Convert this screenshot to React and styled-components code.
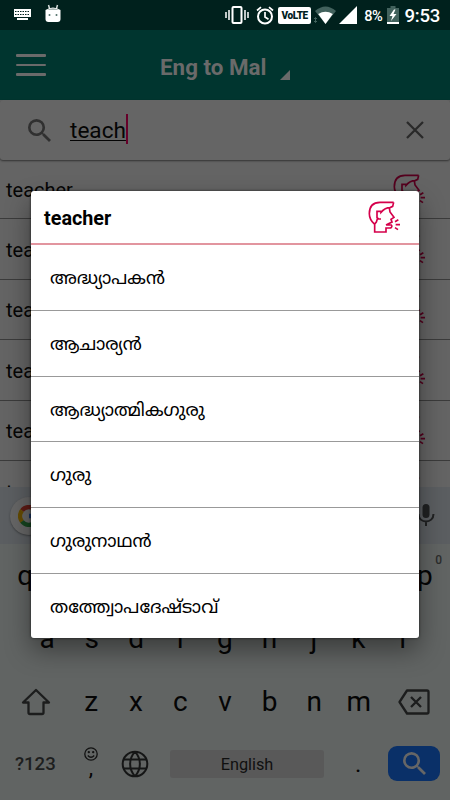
import React from 'react'
import styled, { createGlobalStyle } from 'styled-components';

const GlobalStyle = createGlobalStyle`
  * {
    box-sizing: border-box;
  }
  body {
    margin: 0;
    font-family: Roboto, "Liberation Sans", sans-serif;
  }
  svg {
    display: block;
    flex: none;
  }
`;

const Screen = styled.div`
  position: relative;
  display: flex;
  flex-direction: column;
  width: 450px;
  height: 800px;
  overflow: hidden;
  background: #646464;
`;

const StatusBar = styled.header`
  display: flex;
  align-items: center;
  height: 30px;
  padding: 0 10px 0 13px;
  background: #00211d;
  color: #fff;
`;

const Notifications = styled.div`
  display: flex;
  align-items: center;
  gap: 13px;
  flex: 1;
`;

const StatusText = styled.span`
  font-size: ${(p) => p.$size}px;
  font-weight: 500;
  line-height: 30px;
  letter-spacing: -0.3px;
  margin: 1px 0 0 ${(p) => p.$gap}px;
`;

const Volte = styled.span`
  width: 33px;
  height: 17px;
  margin: 0 3px 0 4px;
  border-radius: 2px;
  background: #fff;
  color: #00211d;
  font-size: 10px;
  font-weight: 900;
  line-height: 18px;
  letter-spacing: -0.4px;
  text-align: center;
`;

const Toolbar = styled.div`
  display: flex;
  align-items: center;
  height: 70px;
  padding: 0 16px;
  background: #00352f;
  color: #6a6a6a;
`;

const MenuButton = styled.div`
  display: flex;
  flex-direction: column;
  gap: 7px;
  width: 30px;
  span {
    height: 2.4px;
    border-radius: 1px;
    background: #6a6a6a;
  }
`;

const Title = styled.h1`
  display: flex;
  align-items: center;
  margin: 3px 0 0 114px;
  font-size: 22.4px;
  font-weight: 700;
  line-height: 30px;
`;

const Spinner = styled.i`
  width: 0;
  height: 0;
  margin: 16px 0 0 13px;
  border-left: 10px solid transparent;
  border-bottom: 10px solid #6a6a6a;
`;

const SearchBox = styled.div`
  display: flex;
  align-items: center;
  height: 60px;
  padding: 0 22px 0 28px;
  border-radius: 3px;
  background: #656565;
  box-shadow: 0 1px 2px rgba(0, 0, 0, 0.5);
  z-index: 1;
`;

const Query = styled.span`
  flex: 1;
  display: flex;
  align-items: center;
  margin-left: 19px;
  font-size: 22.6px;
  line-height: 26px;
  color: #050505;
  u {
    margin-top: 2px;
    text-decoration-thickness: 1px;
    text-underline-offset: 2px;
  }
`;

const Caret = styled.i`
  width: 2px;
  height: 30px;
  margin-top: -2px;
  background: #66002a;
`;

const WordList = styled.ul`
  flex: 1;
  min-height: 0;
  overflow: hidden;
  margin: 0;
  padding: 0;
  list-style: none;
`;

const WordRow = styled.li`
  display: flex;
  align-items: center;
  justify-content: space-between;
  height: 60.5px;
  padding: 2px 25px 0 6px;
  border-bottom: 1px solid #3b3b3b;
  font-size: 20px;
  color: #060606;
  &:first-child {
    height: 59px;
  }
`;

const Keyboard = styled.section`
  height: 313px;
  background: #616463;
  color: #050505;
`;

const Suggestions = styled.div`
  display: flex;
  align-items: center;
  justify-content: space-between;
  height: 57px;
  padding: 0 14px 0 10px;
  background: #5b5e61;
`;

const GoogleButton = styled.div`
  display: flex;
  align-items: center;
  justify-content: center;
  width: 38px;
  height: 38px;
  border-radius: 50%;
  background: #666;
  box-shadow: 0 1px 2px rgba(0, 0, 0, 0.35);
`;

const KeyRow = styled.div`
  display: flex;
  align-items: center;
  height: 63px;
  padding: 0 ${(p) => p.$pad}px;
`;

const Key = styled.div`
  position: relative;
  flex: 1;
  font-size: 28px;
  line-height: 40px;
  text-align: center;
`;

const KeyHint = styled.sup`
  position: absolute;
  top: -2px;
  right: 5px;
  font-size: 12px;
  font-weight: 500;
  line-height: 12px;
  color: #2b2c2c;
`;

const SideKey = styled.div`
  display: flex;
  justify-content: center;
  width: ${(p) => p.$width}px;
`;

const BottomRow = styled.div`
  display: flex;
  align-items: center;
  height: 61px;
  padding: 0 9px 0 15px;
`;

const SymbolsKey = styled.span`
  width: 61px;
  font-size: 18.6px;
  font-weight: 500;
  color: #1d1e1e;
`;

const EmojiKey = styled.span`
  display: flex;
  flex-direction: column;
  align-items: center;
  width: 30px;
  margin-top: -5px;
  font-size: 22px;
  line-height: 14px;
`;

const SpaceBar = styled.span`
  width: 154px;
  height: 28px;
  margin-left: 21px;
  border-radius: 3px;
  background: #595959;
  color: #101010;
  font-size: 16.3px;
  line-height: 29px;
  text-align: center;
`;

const PeriodKey = styled.span`
  width: 64px;
  padding-left: 31px;
  font-size: 24px;
`;

const SearchKey = styled.span`
  display: flex;
  align-items: center;
  justify-content: center;
  width: 52px;
  height: 35px;
  border-radius: 9px;
  background: #0a3068;
`;

const Overlay = styled.div`
  position: absolute;
  inset: 0;
  z-index: 2;
  padding: 191px 31px 0;
`;

const Dialog = styled.div`
  height: 447px;
  overflow: hidden;
  border-radius: 3px;
  background: #fff;
  color: #000;
`;

const DialogShadow = styled.div`
  border-radius: 3px;
  box-shadow: 0 12px 26px rgba(0, 0, 0, 0.4), 0 0 3px rgba(0, 0, 0, 0.6);
`;

const DialogHeader = styled.div`
  display: flex;
  align-items: center;
  justify-content: space-between;
  height: 54px;
  padding: 0 19px 0 13px;
  border-bottom: 2px solid #e2959f;
  font-size: 19.8px;
  font-weight: 700;
  span {
    margin-top: 2px;
  }
`;

const Meaning = styled.div`
  height: 65.8px;
  padding-left: 19px;
  border-bottom: 1px solid #999;
  font-family: Roboto, "Noto Sans Malayalam", "Noto Sans", sans-serif;
  font-size: 17.9px;
  line-height: 65px;
  white-space: nowrap;
  &:last-child {
    border-bottom: 0;
  }
`;

const meanings = [
  'അദ്ധ്യാപകൻ',
  'ആചാര്യൻ',
  'ആദ്ധ്യാത്മികഗുരു',
  'ഗുരു',
  'ഗുരുനാഥൻ',
  'തത്ത്വോപദേഷ്ടാവ്',
];

const words = ['teacher', 'teachers', 'teach', 'teaching', 'teachable', 'teachings'];

const SpeakIcon = ({ color = '#d5004b' }) => (
  <svg width="32" height="32" viewBox="0 0 96 96" fill="none" stroke={color} strokeWidth="5">
    <path d="M77 4H36C14 4 4 18 4 38c0 15 7 24 16 32v23h34V81h14c5-4 4-7 2-9H54M54 72l18-9-3-8 9-6-12-16-2-12 10-5 3-12M66 20c-11 0-19 5-27 14v-3H27v19l5 4h7M29 51l-4 12-6 7" />
    <path d="M81 62l10-6M83 71h13M81 80l9 6" />
  </svg>
);

const SearchIcon = ({ size, color }) => (
  <svg width={size} height={size} viewBox="3 3 17.5 17.5" fill={color}>
    <path d="M15.5 14h-.79l-.28-.27A6.47 6.47 0 0 0 16 9.5 6.5 6.5 0 1 0 9.5 16c1.61 0 3.09-.59 4.23-1.57l.27.28v.79l5 4.99L20.49 19l-4.99-5zm-6 0a4.5 4.5 0 1 1 0-9 4.5 4.5 0 0 1 0 9z" />
  </svg>
);

const AlarmIcon = styled.svg`
  margin-left: 7px;
`;

const StatusIcons = () => (
  <>
    <svg width="24" height="20" viewBox="0 0 24 20" fill="none" stroke="#fff" strokeWidth="2">
      <rect x="7.5" y="2" width="9" height="16" rx="1" />
      <path d="M4 5v10M1 7v6M20 5v10M23 7v6" strokeWidth="1.5" />
    </svg>
    <AlarmIcon width="18" height="19" viewBox="0 0 18 19" fill="none" stroke="#fff">
      <circle cx="9" cy="10.5" r="7" strokeWidth="2" />
      <path d="M9 6v5l3.5 2.2M1 4.5l4-3.4M17 4.5l-4-3.4" strokeWidth="1.7" />
    </AlarmIcon>
    <Volte>VoLTE</Volte>
    <svg width="23" height="18" viewBox="0 0 23 18">
      <path d="M1 5Q11.5-4 22 5L11.5 18z" fill="#42625d" />
      <path d="M4.2 8Q11.5 3.5 18.8 8L11.5 18z" fill="#fff" />
      <path d="M1.5 11.5v5M0 13l1.5-1.5L3 13M0 15l1.5 1.5L3 15" fill="none" stroke="#42625d" />
    </svg>
    <svg width="20" height="18" viewBox="-2 0 20 18">
      <path d="M18 0v18H0z" fill="#fff" />
    </svg>
  </>
);

const BatteryIcon = styled.svg`
  margin-left: 4px;
`;

const Battery = () => (
  <BatteryIcon width="12" height="18" viewBox="0 0 12 18">
    <path d="M3.5 0h5v2H12v14H0V2h3.5z" fill="#42625d" />
    <path d="M0 16h12v2H0zM7 3.5L2.5 10H5.5L4 15l5.500-7H6.5l2-4.5z" fill="#fff" />
  </BatteryIcon>
);

const AndroidHead = styled.svg`
  margin-top: -3px;
`;

const NotificationIcons = () => (
  <Notifications>
    <svg width="19" height="12" viewBox="0 0 19 12">
      <path d="M1 0h17v8H1zM4 9h11v2H4z" fill="#fff" />
      <path d="M2 2.5h15M2 5.5h15" stroke="#00211d" strokeDasharray="1.5 1" />
    </svg>
    <AndroidHead width="16" height="19" viewBox="0 0 16 19">
      <path d="M3.5 1l1.2 4M12.5 1l-1.2 4" stroke="#d5dddb" strokeWidth="1.5" />
      <path d="M.5 6Q8 1 15.5 6v9q0 3-3 3h-9q-3 0-3-3z" fill="#fff" />
      <path d="M2 6Q8 2.5 14 6z" fill="#a5b3b0" />
      <circle cx="4.5" cy="11" r="1" fill="#53706b" />
      <circle cx="11.5" cy="11" r="1" fill="#53706b" />
    </AndroidHead>
  </Notifications>
);

const GoogleIcon = () => (
  <svg width="22" height="22" viewBox="0 0 22 22" fill="none" strokeWidth="4.4">
    <path d="M4 5.5A8.8 8.8 0 0 1 17.5 5" stroke="#5e1b15" />
    <path d="M4 16.5A8.8 8.8 0 0 1 4 5.5" stroke="#644b02" />
    <path d="M17 17.5A8.8 8.8 0 0 1 4 16.5" stroke="#15441f" />
    <path d="M11 11h8.8a8.8 8.8 0 0 1-2.8 6.5" stroke="#1a3561" />
  </svg>
);

const MicIcon = () => (
  <svg width="20" height="26" viewBox="0 0 20 26">
    <rect x="6.500" y="1" width="7" height="14" rx="3.5" fill="#202122" />
    <path d="M2.500 11c0 10 15 10 15 0M10 18.5V23" fill="none" stroke="#202122" strokeWidth="2" />
  </svg>
);

const ShiftIcon = () => (
  <svg width="30" height="28" viewBox="0 0 30 28" fill="none" stroke="#1c1d1d" strokeWidth="2.3" strokeLinejoin="round">
    <path d="M15 2L2 14.5h5.5v10q0 1.5 1.5 1.5h12q1.5 0 1.5-1.5v-10H28z" />
  </svg>
);

const BackspaceIcon = () => (
  <svg width="32" height="26" viewBox="0 0 32 26" fill="none" stroke="#1c1d1d" strokeWidth="2.3" strokeLinejoin="round">
    <path d="M9 1.5h20q1.5 0 1.5 1.5v20q0 1.5-1.5 1.5H9L1.5 13z" />
    <path d="M13 8l10 10M23 8L13 18" />
  </svg>
);

const EmojiIcon = () => (
  <svg width="14" height="14" viewBox="0 0 14 14" fill="none" stroke="#111" strokeWidth="1.3">
    <circle cx="7" cy="7" r="6.2" />
    <path d="M3.8 8.5q3.2 3.5 6.4 0" />
    <circle cx="4.8" cy="5.2" r=".5" />
    <circle cx="9.2" cy="5.2" r=".5" />
  </svg>
);

const Globe = styled.svg`
  margin-left: 15px;
`;

const GlobeIcon = () => (
  <Globe width="28" height="28" viewBox="0 0 28 28" fill="none" stroke="#151616" strokeWidth="2">
    <circle cx="14" cy="14" r="12.3" />
    <path d="M2.5 9.5h23M2.5 18.5h23M14 1.7C7.5 9 7.5 19 14 26.3M14 1.7C20.5 9 20.5 19 14 26.3" />
  </Globe>
);

function App() {
  return (
    <Screen>
      <GlobalStyle />
      <StatusBar>
        <NotificationIcons />
        <StatusIcons />
        <StatusText $size={14.6} $gap={7}>8%</StatusText>
        <Battery />
        <StatusText $size={18.6} $gap={6}>9:53</StatusText>
      </StatusBar>
      <Toolbar>
        <MenuButton><span /><span /><span /></MenuButton>
        <Title>Eng to Mal<Spinner /></Title>
      </Toolbar>
      <SearchBox>
        <SearchIcon size={23} color="#303030" />
        <Query><u>teach</u><Caret /></Query>
        <svg width="26" height="26" viewBox="0 0 26 26" stroke="#292929" strokeWidth="2.2">
          <path d="M5 5l16 16M21 5L5 21" />
        </svg>
      </SearchBox>
      <WordList>
        {words.map((word) => (
          <WordRow key={word}>
            {word}
            <SpeakIcon color="#55001e" />
          </WordRow>
        ))}
      </WordList>
      <Keyboard>
        <Suggestions>
          <GoogleButton><GoogleIcon /></GoogleButton>
          <MicIcon />
        </Suggestions>
        <KeyRow $pad={3}>
          {[...'qwertyuiop'].map((letter, i) => (
            <Key key={letter}>{letter}<KeyHint>{(i + 1) % 10}</KeyHint></Key>
          ))}
        </KeyRow>
        <KeyRow $pad={25}>
          {[...'asdfghjkl'].map((letter) => <Key key={letter}>{letter}</Key>)}
        </KeyRow>
        <KeyRow $pad={3}>
          <SideKey $width={66}><ShiftIcon /></SideKey>
          {[...'zxcvbnm'].map((letter) => <Key key={letter}>{letter}</Key>)}
          <SideKey $width={66}><BackspaceIcon /></SideKey>
        </KeyRow>
        <BottomRow>
          <SymbolsKey>?123</SymbolsKey>
          <EmojiKey><EmojiIcon />,</EmojiKey>
          <GlobeIcon />
          <SpaceBar>English</SpaceBar>
          <PeriodKey>.</PeriodKey>
          <SearchKey><SearchIcon size={23} color="#666" /></SearchKey>
        </BottomRow>
      </Keyboard>
      <Overlay>
        <DialogShadow>
          <Dialog>
            <DialogHeader>
              <span>teacher</span>
              <SpeakIcon />
            </DialogHeader>
            {meanings.map((meaning) => <Meaning key={meaning}>{meaning}</Meaning>)}
          </Dialog>
        </DialogShadow>
      </Overlay>
    </Screen>
  );
}

export default App;
